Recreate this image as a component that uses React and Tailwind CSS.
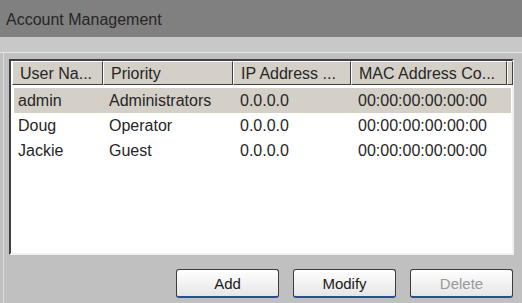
import React from "react";

const columns = [
  { label: "User Na...", width: "w-[91px]" },
  { label: "Priority", width: "w-[130px]" },
  { label: "IP Address ...", width: "w-[118px]" },
  { label: "MAC Address Co...", width: "w-[156px]" },
];

const rows = [
  { user: "admin", priority: "Administrators", ip: "0.0.0.0", mac: "00:00:00:00:00:00", selected: true },
  { user: "Doug", priority: "Operator", ip: "0.0.0.0", mac: "00:00:00:00:00:00" },
  { user: "Jackie", priority: "Guest", ip: "0.0.0.0", mac: "00:00:00:00:00:00" },
];

function Button({ children, disabled }) {
  return (
    <button
      className={`w-[103px] h-[29px] pt-[2px] rounded-[3px] border border-[#3c3c3c] border-b-[#2a4f8a] border-b-2 bg-gradient-to-b from-white to-[#e6e6e6] text-[15px] ${
        disabled ? "text-[#9a9a9a]" : "text-[#1a1a1a]"
      }`}
    >
      {children}
    </button>
  );
}

export default function App() {
  return (
    <div className="w-[522px] h-[303px] flex flex-col bg-[#c0c0c0] font-['Liberation_Sans',Arial,sans-serif] overflow-hidden">
      {/* Title bar */}
      <div className="h-[37px] bg-[#808080] flex items-center pl-[6px] pt-[3px] text-[16px] text-[#262626]">
        Account Management
      </div>

      {/* strip */}
      <div className="h-[16px] bg-[#c8c8c8] border-b border-[#e4e4e4]" />

      {/* Panel */}
      <div className="flex-1 flex flex-col border-l border-[#dcdcdc] ml-[3px] pl-[5px] pr-[8px] pt-[6px]">
        {/* List box */}
        <div className="h-[196px] border-2 border-t-[#404040] border-l-[#404040] border-r-[#f0f0f0] border-b-[#f0f0f0] bg-white flex flex-col">
          {/* Header */}
          <div className="flex h-[24px] pl-[1px]">
            {columns.map((c) => (
              <div
                key={c.label}
                className={`${c.width} shrink-0 bg-[#d4d0c8] border border-t-white border-l-white border-r-[#404040] border-b-[#404040] flex items-center pl-[7px] pt-[2px] text-[16px] text-[#262626]`}
              >
                {c.label}
              </div>
            ))}
            <div className="w-[6px] shrink-0 bg-[#d4d0c8] border border-t-white border-l-white border-r-[#404040] border-b-[#404040]" />
          </div>

          {/* Rows */}
          <div className="pt-[3px] pl-[3px] pr-[1px]">
            {rows.map((r) => (
              <div
                key={r.user}
                className={`flex h-[25px] items-center pt-[1px] text-[16px] text-[#262626] ${
                  r.selected ? "bg-[#d4d0c8]" : ""
                }`}
              >
                <div className="w-[91px] shrink-0 pl-[4px]">{r.user}</div>
                <div className="w-[131px] shrink-0 pl-[4px]">{r.priority}</div>
                <div className="w-[118px] shrink-0 pl-[4px]">{r.ip}</div>
                <div className="flex-1 pl-[4px]">{r.mac}</div>
              </div>
            ))}
          </div>
        </div>

        {/* Buttons */}
        <div className="flex justify-end gap-[14px] mt-[14px] mr-[1px]">
          <Button>Add</Button>
          <Button>Modify</Button>
          <Button disabled>Delete</Button>
        </div>
      </div>
    </div>
  );
}
